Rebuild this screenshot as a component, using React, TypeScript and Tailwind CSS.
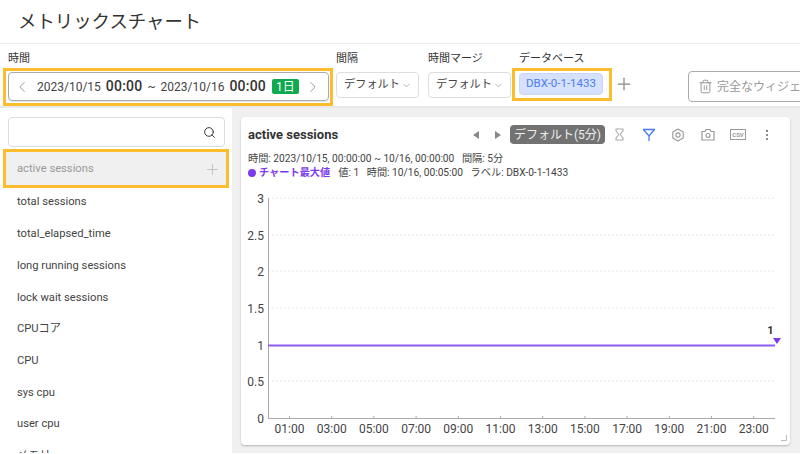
import React from "react";
import { ChevronLeft, ChevronRight, ChevronDown, Plus, Trash2, Search, EllipsisVertical } from "lucide-react";

const font = { fontFamily: "Roboto, 'Noto Sans CJK JP', sans-serif" };
const items = ["total sessions", "total_elapsed_time", "long running sessions", "lock wait sessions", "CPUコア", "CPU", "sys cpu", "user cpu", "メモリ"];
const ys: [string, number][] = [["3", 198], ["2.5", 235], ["2", 271], ["1.5", 308], ["1", 345], ["0.5", 381], ["0", 418]];
const xs = ["01:00", "03:00", "05:00", "07:00", "09:00", "11:00", "13:00", "15:00", "17:00", "19:00", "21:00", "23:00"];

function Select() {
  return (
    <div className="w-[83px] h-[26px] mt-[5px] flex items-center justify-between pl-[7px] pr-[6px] border border-[#dedede] rounded-[4px] bg-white text-[11.2px] text-[#444] whitespace-nowrap">
      <span>デフォルト</span>
      <ChevronDown size={11} strokeWidth={1.1} className="text-[#777] shrink-0" />
    </div>
  );
}

function Label({ children, className = "" }: { children: React.ReactNode; className?: string }) {
  return <div className={`text-[11px] h-[16px] leading-[16px] text-[#333] whitespace-nowrap ${className}`}>{children}</div>;
}

export default function App() {
  return (
    <div style={font} className="w-[800px] h-[454px] overflow-hidden bg-white flex flex-col pb-px">
      <header className="h-[44px] shrink-0 border-b border-[#ececec] pl-[18px] pt-[1px] flex items-center text-[18.4px] text-[#333]">
        メトリックスチャート
      </header>

      <div className="h-[64px] shrink-0 flex items-start pl-[3px] pt-[7px] border-b-2 border-[#e9e9e9] overflow-hidden">
        <div className="w-[330px] mr-[3px] shrink-0">
          <Label className="pl-[5px]">時間</Label>
          <div className="mt-[1px] h-[38px] border-3 border-[#fbbc2d] pl-[2px] pr-[1px] pt-[1px]">
            <div className="h-[29px] flex items-center border border-[#aaa] rounded-[4px] pl-[4px] text-[12px] text-[#444] whitespace-nowrap shadow-[0_1px_1px_rgba(0,0,0,0.1)]">
              <ChevronLeft size={18} strokeWidth={1.1} className="text-[#888] mr-[6px] shrink-0" />
              <span>2023/10/15</span>
              <span className="ml-[5px] text-[14px] font-medium tracking-[0.2px] text-[#333]">00:00</span>
              <span className="mx-[5px]">~</span>
              <span>2023/10/16</span>
              <span className="ml-[5px] text-[14px] font-medium tracking-[0.2px] text-[#333]">00:00</span>
              <span className="ml-[6px] w-[27px] h-[15px] rounded-[2px] bg-[#0fa950] text-white text-[12px] flex items-center justify-center shrink-0">1日</span>
              <ChevronRight size={18} strokeWidth={1.1} className="text-[#888] ml-[5px] shrink-0" />
            </div>
          </div>
        </div>
        <div className="w-[83px] mr-[9px] shrink-0">
          <Label>間隔</Label>
          <Select />
        </div>
        <div className="w-[83px] mr-[1px] shrink-0">
          <Label>時間マージ</Label>
          <Select />
        </div>
        <div className="w-[100px] shrink-0">
          <Label className="pl-[7px]">データベース</Label>
          <div className="mt-[1px] h-[33px] border-3 border-[#fbbc2d] pl-[4px] pt-[2px]">
            <div className="h-[22px] w-[84px] rounded-[4px] bg-[#d6e2fd] border border-[#c6d6fb] text-[11.5px] text-[#4a7df0] flex items-center justify-center">DBX-0-1-1433</div>
          </div>
        </div>
        <Plus size={20} strokeWidth={1.5} className="text-[#888] mt-[23px] ml-[2px] shrink-0" />
        <div className="ml-[54px] mt-[20px] h-[31px] w-[160px] shrink-0 flex items-center border border-[#aaa] rounded-[4px] pl-[9px] text-[12px] text-[#999] whitespace-nowrap">
          <Trash2 size={15} strokeWidth={1.4} className="text-[#888] mr-[4px] shrink-0" />
          完全なウィジェットを削除
        </div>
      </div>

      <div className="flex-1 flex min-h-0">
        <aside className="w-[232px] shrink-0 bg-white overflow-hidden">
          <div className="ml-[8px] mt-[9px] h-[30px] w-[217px] border border-[#dcdcdc] rounded-[4px] flex items-center justify-end pr-[8px]">
            <Search size={13} strokeWidth={1.8} className="text-[#333]" />
          </div>
          <div className="mt-[2px] ml-[3px] w-[226px] h-[39px] border-3 border-[#fbbc2d] bg-white">
            <div className="h-[33px] pt-[2px] bg-[#f0f0f0] flex items-center justify-between pl-[11px] pr-[5px] text-[11.2px] text-[#999]">
              <span>active sessions</span>
              <Plus size={17} strokeWidth={1.2} className="text-[#bbb]" />
            </div>
          </div>
          <div className="-mt-[1px]">
            {items.map((t) => (
              <div key={t} className="h-[31.7px] flex items-center pl-[17px] text-[11.2px] text-[#444]">{t}</div>
            ))}
          </div>
        </aside>

        <main className="flex-1 bg-[#f0f0f0] pl-[9px] pr-[10px] pt-[9px] overflow-hidden">
          <section className="w-[549px] h-[328px] bg-white rounded-[4px] shadow-[0_1px_2px_rgba(0,0,0,0.25)] flex flex-col">
            <div className="h-[35px] shrink-0 flex items-center pl-[7px] pr-[16px]">
              <span className="text-[13px] font-bold text-[#333]">active sessions</span>
              <svg width="6" height="8" viewBox="0 0 6 8" className="ml-auto text-[#888]"><path d="M6 0v8L0 4z" fill="currentColor" /></svg>
              <svg width="6" height="8" viewBox="0 0 6 8" className="ml-[16px] text-[#888]"><path d="M0 0v8l6-4z" fill="currentColor" /></svg>
              <div className="ml-[9px] h-[19px] w-[95px] bg-[#727272] rounded-[4px] text-[#eee] text-[12px] flex items-center justify-center whitespace-nowrap">デフォルト(5分)</div>
              <svg width="13" height="13" viewBox="0 0 13 13" fill="none" stroke="#aaa" strokeWidth="1.1" className="ml-[8px]">
                <path d="M3 1h7v2L7.2 6.5 10 10v2H3v-2l2.8-3.5L3 3z" strokeLinejoin="round" />
              </svg>
              <svg width="14" height="14" viewBox="0 0 14 14" fill="none" stroke="#4a7df0" strokeWidth="1.3" className="ml-[16px]"><path d="M1 1.5h12" strokeWidth="1.6" /><path d="M1.5 1.5L7 8l5.5-6.5M7 8v5" /></svg>
              <svg width="14" height="14" viewBox="0 0 14 14" fill="none" stroke="#999" strokeWidth="1.1" className="ml-[15px]">
                <path d="M7 1l5.2 3v6L7 13l-5.2-3V4z" strokeLinejoin="round" />
                <circle cx="7" cy="7" r="2.1" />
              </svg>
              <svg width="14" height="13" viewBox="0 0 14 13" fill="none" stroke="#999" strokeWidth="1.2" className="ml-[16px]">
                <path d="M1 3.5h3l1-2h4l1 2h3v8.5H1z" strokeLinejoin="round" />
                <circle cx="7" cy="7.5" r="2" />
              </svg>
              <svg width="16" height="11" viewBox="0 0 16 11" className="ml-[15px]">
                <rect x="0.5" y="0.5" width="15" height="10" fill="none" stroke="#999" />
                <text x="8" y="8" textAnchor="middle" fontSize="6" fontWeight="700" fill="#999">CSV</text>
              </svg>
              <EllipsisVertical size={14} strokeWidth={1.8} className="ml-[14px] text-[#777]" />
            </div>
            <div className="pl-[7px] text-[10.2px] leading-[14px] text-[#444] whitespace-nowrap">
              <div>時間: 2023/10/15, 00:00:00 ~ 10/16, 00:00:00&nbsp;&nbsp; 間隔: 5分</div>
              <div className="flex items-center">
                <span className="w-[8px] h-[8px] rounded-full bg-[#7c3aed] mr-[3px]" />
                <span className="font-bold text-[#7c3aed] mr-[8px]">チャート最大値</span>
                <span>値: 1&nbsp;&nbsp; 時間: 10/16, 00:05:00&nbsp;&nbsp; ラベル: DBX-0-1-1433</span>
              </div>
            </div>
            <svg viewBox="241 190 549 255" className="w-[549px] h-[255px] mt-auto block" style={font}>
              {ys.filter(([l]) => l !== "0" && l !== "1").map(([l, y]) => (
                <line key={l} x1="268" x2="775" y1={y} y2={y} stroke="#e6e6e6" strokeDasharray="2 2" />
              ))}
              <line x1="268.5" x2="268.5" y1="198" y2="419" stroke="#aaa" />
              <line x1="268" x2="775" y1="418.5" y2="418.5" stroke="#aaa" />
              {ys.map(([l, y]) => (
                <text key={l} x="264" y={y + 4.5} textAnchor="end" fontSize="12" fill="#444">{l}</text>
              ))}
              {xs.map((l, i) => {
                const x = 289.5 + i * 42.2;
                return (
                  <g key={l}>
                    <line x1={x} x2={x} y1="416" y2="419" stroke="#aaa" />
                    <text x={x} y="433" textAnchor="middle" fontSize="12" fill="#444">{l}</text>
                  </g>
                );
              })}
              <line x1="268" x2="775" y1="345.6" y2="345.6" stroke="#8b5cf6" strokeWidth="2" />
              <text x="770.5" y="334" textAnchor="middle" fontSize="11" fontWeight="700" fill="#333">1</text>
              <path d="M773 338h8l-4 6z" fill="#7c3aed" />
              <path d="M786.5 435v5.5H781" fill="none" stroke="#bbb" />
            </svg>
          </section>
        </main>
      </div>
    </div>
  );
}
